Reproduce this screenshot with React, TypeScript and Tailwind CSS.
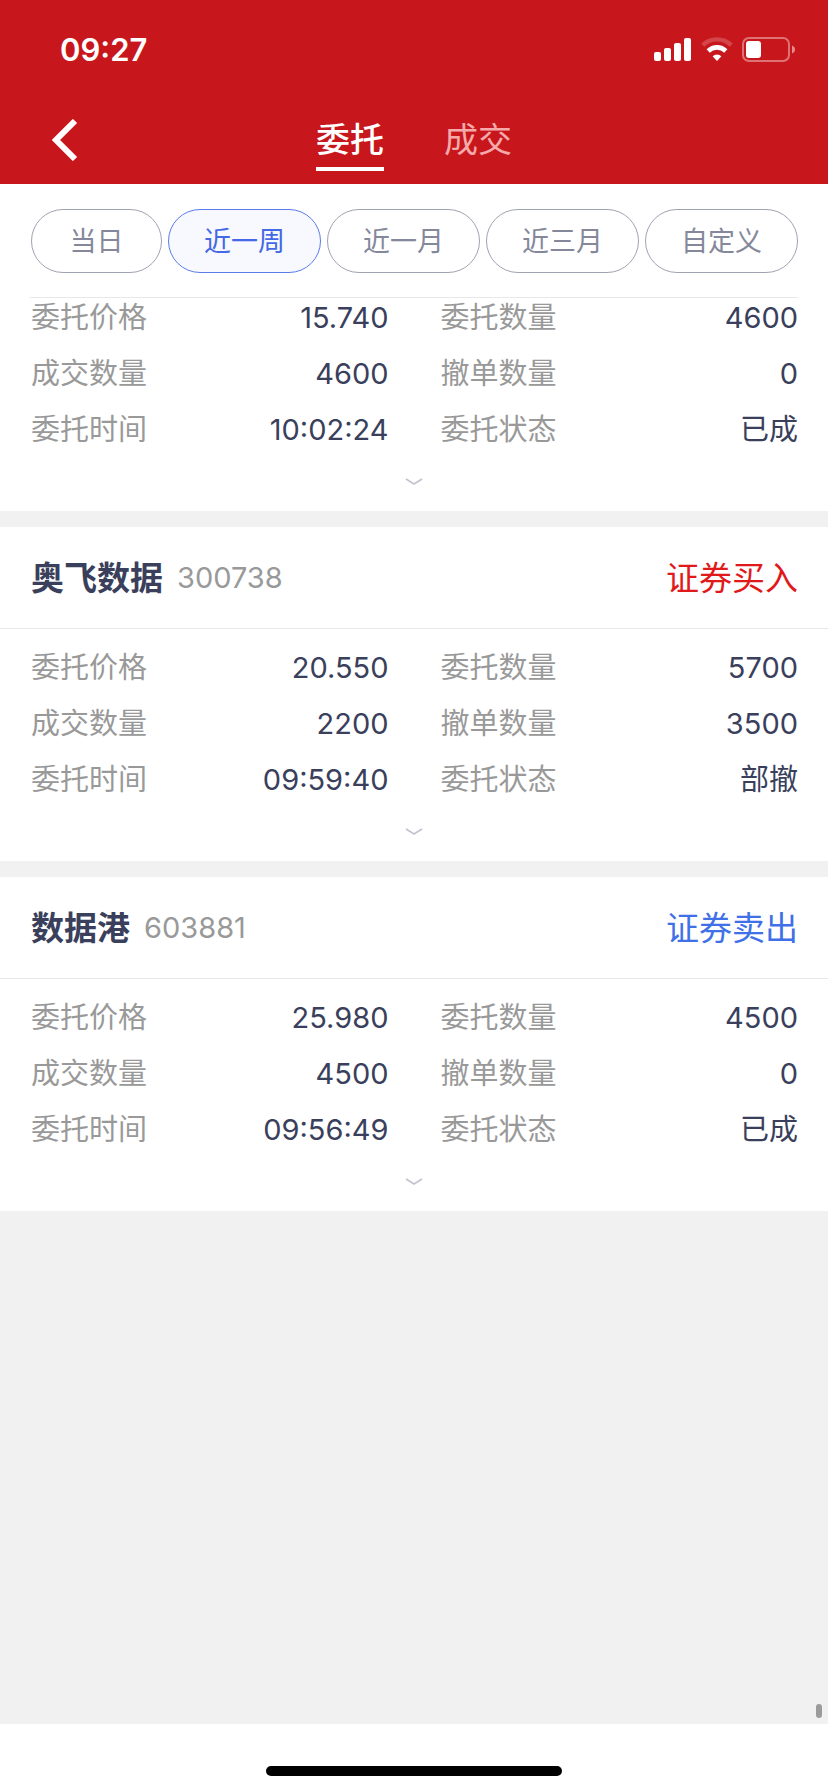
import { useState } from 'react'

interface Order {
  id: string
  name: string
  code: string
  side: 'buy' | 'sell'
  price: string
  amount: string
  filled: string
  cancelled: string
  time: string
  status: string
}

const RANGES = ['当日', '近一周', '近一月', '近三月', '自定义']

const ORDERS: Order[] = [
  {
    id: '1',
    name: '奥飞数据',
    code: '300738',
    side: 'buy',
    price: '20.550',
    amount: '5700',
    filled: '2200',
    cancelled: '3500',
    time: '09:59:40',
    status: '部撤',
  },
  {
    id: '2',
    name: '数据港',
    code: '603881',
    side: 'sell',
    price: '25.980',
    amount: '4500',
    filled: '4500',
    cancelled: '0',
    time: '09:56:49',
    status: '已成',
  },
]

// first row of the list, its heading is scrolled under the filter bar
const SCROLLED_ORDER = {
  price: '15.740',
  amount: '4600',
  filled: '4600',
  cancelled: '0',
  time: '10:02:24',
  status: '已成',
}

function StatusIcons() {
  return (
    <div className="flex items-center gap-[9px]" aria-hidden="true">
      <svg width="38" height="26" viewBox="0 0 38 26" fill="#fff">
        <rect x="0" y="15" width="7" height="9" rx="2" />
        <rect x="10" y="11" width="7" height="13" rx="2" />
        <rect x="20" y="6" width="7" height="18" rx="2" />
        <rect x="30" y="1" width="7" height="23" rx="2" />
      </svg>
      <svg width="32" height="26" viewBox="0 0 32 26" fill="none" stroke="#fff">
        <path d="M1.7 8.2a20.5 20.5 0 0 1 28.6 0" strokeWidth="4.4" opacity=".2" />
        <path d="M7.2 14a12.6 12.6 0 0 1 17.6 0" strokeWidth="4.6" />
        <path d="M11.6 19.2a6.3 6.3 0 0 1 8.8 0L16 24z" fill="#fff" stroke="none" />
      </svg>
      <svg width="54" height="26" viewBox="0 0 54 26" fill="none">
        <rect x="1" y="1" width="46" height="23" rx="6" stroke="#fff" strokeWidth="2" opacity=".4" />
        <rect x="4" y="4" width="15" height="17" rx="3" fill="#fff" />
        <path d="M50 8.5c1.8.7 3 2.2 3 4s-1.2 3.3-3 4z" fill="#fff" opacity=".5" />
      </svg>
    </div>
  )
}

function Field({ label, value }: { label: string; value: string }) {
  return (
    <div className="flex h-14 items-center justify-between">
      <dt className="text-[#999]">{label}</dt>
      <dd className="text-[#3a3f5c]">{value}</dd>
    </div>
  )
}

function OrderDetails({ order }: { order: Omit<Order, 'id' | 'name' | 'code' | 'side'> }) {
  return (
    <>
      <dl className="grid grid-cols-2 gap-x-[52px] pr-[30px] pl-[31px] text-[29px] leading-10">
        <Field label="委托价格" value={order.price} />
        <Field label="委托数量" value={order.amount} />
        <Field label="成交数量" value={order.filled} />
        <Field label="撤单数量" value={order.cancelled} />
        <Field label="委托时间" value={order.time} />
        <Field label="委托状态" value={order.status} />
      </dl>
      <button type="button" aria-label="展开" className="flex h-[53px] w-full justify-center pt-5">
        <svg width="18" height="8" viewBox="0 0 18 8" fill="none" stroke="#c3c4ce" strokeWidth="1.8">
          <path d="M1 1l8 5 8-5" />
        </svg>
      </button>
    </>
  )
}

function OrderCard({ order }: { order: Order }) {
  return (
    <article className="bg-white">
      <header className="flex h-[102px] items-center justify-between border-b border-[#e8e8e8] pr-[30px] pl-[31px]">
        <div className="flex items-center gap-3.5">
          <h2 className="text-[33px] leading-10 font-bold text-[#3a3f5c]">{order.name}</h2>
          <span className="text-[29px] leading-10 text-[#999]">{order.code}</span>
        </div>
        <span
          className={`text-[33px] leading-10 ${order.side === 'buy' ? 'text-[#e01a1a]' : 'text-[#4070e8]'}`}
        >
          {order.side === 'buy' ? '证券买入' : '证券卖出'}
        </span>
      </header>
      <div className="pt-[11px]">
        <OrderDetails order={order} />
      </div>
    </article>
  )
}

export default function App() {
  const [tab, setTab] = useState('委托')
  const [range, setRange] = useState('近一周')

  return (
    <div className="flex min-h-screen flex-col bg-white font-[Inter,'Noto_Sans_CJK_SC',sans-serif]">
      <div className="bg-[#c8171c] text-white">
        <div className="flex h-24 items-center justify-between pt-1 pr-8 pl-[60px]">
          <span className="text-[31px] leading-10 font-semibold">09:27</span>
          <StatusIcons />
        </div>
        <nav className="grid h-[88px] grid-cols-[1fr_auto_1fr]">
          <button type="button" aria-label="返回" className="flex items-center justify-self-start pl-[52px]">
            <svg width="26" height="42" viewBox="0 0 26 42" fill="none" stroke="#fff" strokeWidth="6">
              <path d="M23 2L4 21l19 19" />
            </svg>
          </button>
          <div className="flex items-start gap-[60px] pt-5">
            {['委托', '成交'].map((name) => (
              <button
                key={name}
                type="button"
                onClick={() => setTab(name)}
                className={`h-[55px] border-b-4 pb-1 text-[34px] leading-12 ${
                  tab === name ? 'border-white font-medium' : 'border-transparent text-[#f5a9ab]'
                }`}
              >
                {name}
              </button>
            ))}
          </div>
        </nav>
      </div>

      <div className="relative z-10 bg-white px-[30px]">
        <div className="flex h-[114px] items-start gap-1.5 border-b border-[#e8e8e8] pt-[25px] pl-px">
          {RANGES.map((name, idx) => (
            <button
              key={name}
              type="button"
              onClick={() => setRange(name)}
              className={`h-16 rounded-full border pt-0.5 text-[27px] ${idx === 0 ? 'w-[131px]' : 'flex-1'} ${
                range === name
                  ? 'border-[#5b7bea] bg-[#f7f9fe] text-[#4468e6]'
                  : 'border-[#a0a3b1] text-[#85889b]'
              }`}
            >
              {name}
            </button>
          ))}
        </div>
      </div>

      <main className="relative flex flex-1 flex-col gap-4 bg-[#f1f1f1]">
        <article className="-mt-2 bg-white">
          <OrderDetails order={SCROLLED_ORDER} />
        </article>
        {ORDERS.map((order) => (
          <OrderCard key={order.id} order={order} />
        ))}
        <div className="absolute right-1.5 bottom-1.5 h-3.5 w-1.5 rounded-full bg-[#9b9b9b]" />
      </main>

      <footer className="flex h-[68px] justify-center pt-[42px]">
        <div className="h-2.5 w-[296px] rounded-full bg-black" />
      </footer>
    </div>
  )
}
